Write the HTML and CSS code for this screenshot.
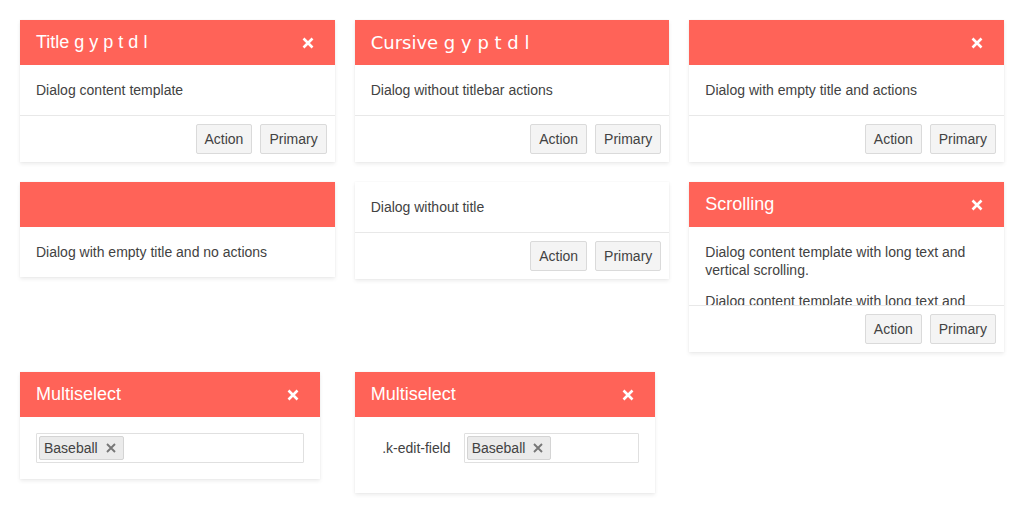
FILE: index.html
```html
<!DOCTYPE html>
<html>
<head>
<meta charset="utf-8">
<link rel="stylesheet" href="styles.css">
</head>
<body>
<div class="page">
  <div class="grid">
    <div class="dialog">
      <div class="titlebar"><span class="title">Title g y p t d l</span><span class="close"><svg viewBox="0 0 12 12" width="12" height="12"><path d="M1.5 1.5L10.5 10.5M10.5 1.5L1.5 10.5" stroke="#fff" stroke-width="2.6"/></svg></span></div>
      <div class="content">Dialog content template</div>
      <div class="actions"><button class="btn">Action</button><button class="btn">Primary</button></div>
    </div>
    <div class="dialog">
      <div class="titlebar"><span class="title cursive">Cursive g y p t d l</span></div>
      <div class="content">Dialog without titlebar actions</div>
      <div class="actions"><button class="btn">Action</button><button class="btn">Primary</button></div>
    </div>
    <div class="dialog">
      <div class="titlebar"><span class="title"></span><span class="close"><svg viewBox="0 0 12 12" width="12" height="12"><path d="M1.5 1.5L10.5 10.5M10.5 1.5L1.5 10.5" stroke="#fff" stroke-width="2.6"/></svg></span></div>
      <div class="content">Dialog with empty title and actions</div>
      <div class="actions"><button class="btn">Action</button><button class="btn">Primary</button></div>
    </div>

    <div class="dialog">
      <div class="titlebar"><span class="title"></span></div>
      <div class="content">Dialog with empty title and no actions</div>
    </div>
    <div class="dialog">
      <div class="content">Dialog without title</div>
      <div class="actions"><button class="btn">Action</button><button class="btn">Primary</button></div>
    </div>
    <div class="dialog">
      <div class="titlebar"><span class="title">Scrolling</span><span class="close"><svg viewBox="0 0 12 12" width="12" height="12"><path d="M1.5 1.5L10.5 10.5M10.5 1.5L1.5 10.5" stroke="#fff" stroke-width="2.6"/></svg></span></div>
      <div class="content scroll">
        <p>Dialog content template with long text and vertical scrolling.</p>
        <p>Dialog content template with long text and vertical scrolling.</p>
        <p>Dialog content template with long text and vertical scrolling.</p>
      </div>
      <div class="actions"><button class="btn">Action</button><button class="btn">Primary</button></div>
    </div>

    <div class="dialog narrow">
      <div class="titlebar"><span class="title">Multiselect</span><span class="close"><svg viewBox="0 0 12 12" width="12" height="12"><path d="M1.5 1.5L10.5 10.5M10.5 1.5L1.5 10.5" stroke="#fff" stroke-width="2.6"/></svg></span></div>
      <div class="content">
        <div class="multiselect"><span class="tag">Baseball<svg class="tag-x" viewBox="0 0 10 10" width="10" height="10"><path d="M1 1L9 9M9 1L1 9" stroke="#777" stroke-width="1.9"/></svg></span></div>
      </div>
    </div>
    <div class="dialog narrow">
      <div class="titlebar"><span class="title">Multiselect</span><span class="close"><svg viewBox="0 0 12 12" width="12" height="12"><path d="M1.5 1.5L10.5 10.5M10.5 1.5L1.5 10.5" stroke="#fff" stroke-width="2.6"/></svg></span></div>
      <div class="content form">
        <div class="form-row">
          <label class="edit-label">.k-edit-field</label>
          <div class="multiselect edit-field"><span class="tag">Baseball<svg class="tag-x" viewBox="0 0 10 10" width="10" height="10"><path d="M1 1L9 9M9 1L1 9" stroke="#777" stroke-width="1.9"/></svg></span></div>
        </div>
      </div>
    </div>
  </div>
</div>
</body>
</html>
```

FILE: styles.css
```css
* { box-sizing: border-box; }
html, body { margin: 0; padding: 0; background: #fff; }
body {
  font-family: "Liberation Sans", Arial, sans-serif;
  font-size: 14px;
  color: #424242;
}
.page { padding: 20px; }
.grid {
  display: grid;
  grid-template-columns: 1fr 1fr 1fr;
  gap: 20px;
  align-items: start;
}
.dialog {
  background: #fff;
  box-shadow: 0 2px 4px rgba(0,0,0,0.08), 0 0 2px rgba(0,0,0,0.04);
  display: flex;
  flex-direction: column;
}
.dialog.narrow { width: 300px; }
.titlebar {
  background: #ff6358;
  color: #fff;
  height: 45px;
  padding: 0 21px 0 16px;
  display: flex;
  align-items: center;
  justify-content: space-between;
}
.title { font-size: 18px; line-height: 25px; }
.title.cursive { font-family: "DejaVu Sans", sans-serif; font-size: 18px; }
.close { display: flex; align-items: center; }
.content {
  padding: 16px;
  line-height: 18px;
}
.content p { margin: 0 0 13px; }
.content.scroll { height: 78px; overflow: hidden; }
.actions {
  border-top: 1px solid #e8e8e8;
  padding: 8px;
  display: flex;
  justify-content: flex-end;
  gap: 8px;
}
.btn {
  font-family: "Liberation Sans", Arial, sans-serif;
  font-size: 14px;
  color: #424242;
  background: #f4f4f4;
  border: 1px solid #dadada;
  border-radius: 2px;
  height: 30px;
  padding: 0 8px;
}
.multiselect {
  height: 30px;
  border: 1px solid #e0e0e0;
  border-radius: 1px;
  padding: 2px;
  display: flex;
  align-items: center;
}
.tag {
  height: 24px;
  background: #ebebeb;
  border: 1px solid #d4d4d4;
  border-radius: 2px;
  padding: 0 7px 0 4px;
  display: inline-flex;
  align-items: center;
  gap: 8px;
  line-height: 22px;
}
.content.form { padding-bottom: 30px; }
.form-row { display: flex; align-items: center; }
.edit-label {
  width: 80px;
  text-align: right;
  margin-right: 13px;
}
.edit-field { width: 175px; }
```
